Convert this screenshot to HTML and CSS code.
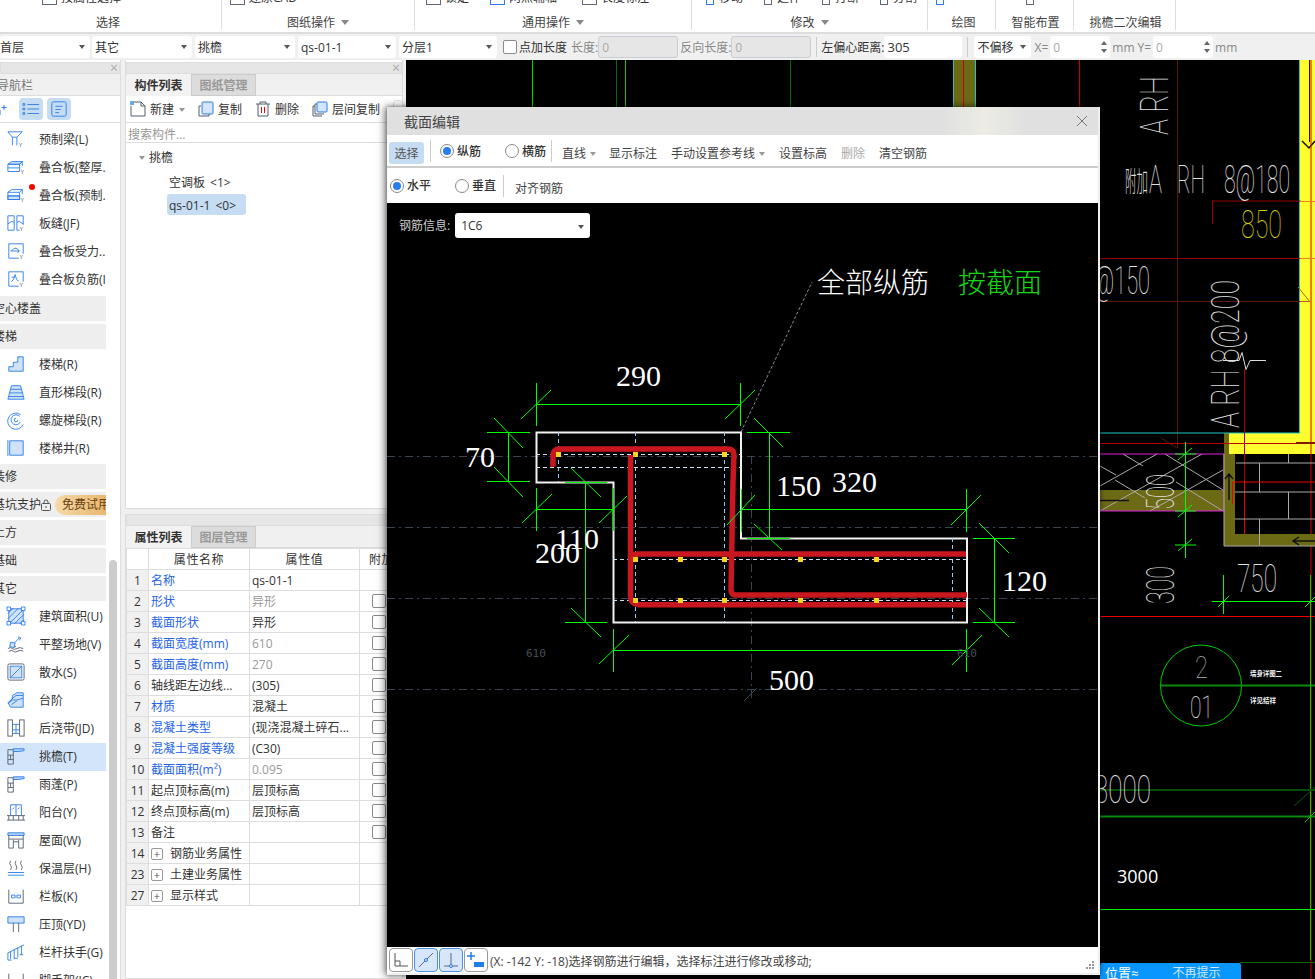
FILE: index.html
```html
<!DOCTYPE html>
<html lang="zh">
<head>
<meta charset="utf-8">
<title>截面编辑</title>
<link rel="stylesheet" href="styles.css">
</head>
<body>
<div class="app">
  <header class="ribbon">
    <section class="rgroup g1"><div class="rtools t1"><i class="ri"></i><span class="rt">按属性选择</span></div><div class="rlabel">选择</div></section>
    <section class="rgroup g2"><div class="rtools t2"><i class="ri"></i><span class="rt">还原CAD</span></div><div class="rlabel">图纸操作<i class="caret"></i></div></section>
    <section class="rgroup g3"><div class="rtools t3"><i class="ri"></i><span class="rt w1">锁定</span><i class="ri b"></i><span class="rt w2">两点辅轴</span><i class="ri"></i><span class="rt">长度标注</span></div><div class="rlabel">通用操作<i class="caret"></i></div></section>
    <section class="rgroup g4"><div class="rtools t4"><i class="ri s b"></i><span class="rt w3">移动</span><i class="ri s"></i><span class="rt w3">延伸</span><i class="ri s"></i><span class="rt w3">打断</span><i class="ri s"></i><span class="rt">分割</span></div><div class="rlabel">修改<i class="caret"></i></div></section>
    <section class="rgroup g5"><div class="rtools t5"><i class="ri s b"></i></div><div class="rlabel">绘图</div></section>
    <section class="rgroup g6"><div class="rtools t6"><i class="ri s"></i></div><div class="rlabel">智能布置</div></section>
    <section class="rgroup g7"><div class="rtools"></div><div class="rlabel">挑檐二次编辑</div></section>
  </header>

  <div class="optbar">
    <div class="sel s-floor">首层<i class="caret dk"></i></div>
    <div class="sel s-a">其它<i class="caret dk"></i></div>
    <div class="sel s-a">挑檐<i class="caret dk"></i></div>
    <div class="sel s-b">qs-01-1<i class="caret dk"></i></div>
    <div class="sel s-b">分层1<i class="caret dk"></i></div>
    <span class="chk opt-chk"></span>
    <span class="opt-t ml2">点加长度</span>
    <span class="opt-t muted ml4">长度:</span>
    <div class="inp dis">0</div>
    <span class="opt-t muted ml2">反向长度:</span>
    <div class="inp dis">0</div>
    <span class="vsep"></span>
    <span class="opt-t">左偏心距离:</span>
    <div class="inp on">305</div>
    <span class="vsep"></span>
    <div class="sel s-c">不偏移<i class="caret dk"></i></div>
    <span class="opt-t muted ml3">X=</span>
    <div class="inp spin"><span>0</span><span class="spn"><i></i><i></i></span></div>
    <span class="opt-t muted ml2">mm</span>
    <span class="opt-t muted ml3">Y=</span>
    <div class="inp spin"><span>0</span><span class="spn"><i></i><i></i></span></div>
    <span class="opt-t muted ml2">mm</span>
  </div>

  <main class="work">
    <aside class="nav">
      <div class="phead"><span class="x">×</span></div>
      <div class="nav-title">导航栏</div>
      <div class="nav-tools">
        <svg class="spark" viewBox="0 0 10 14"><path d="M0 10l3-2M3 8v5M3 10H0M7 3v5M4.500 5.500h5"/></svg>
        <span class="nbtn"><svg viewBox="0 0 20 20" class="bi"><path d="M1 4h2v2H1zM1 9h2v2H1zM1 14h2v2H1zM6 5h13M6 10h13M6 15h13"/></svg></span>
        <span class="nbtn"><svg viewBox="0 0 20 20" class="bi"><rect x="2" y="2" width="16" height="16" rx="2"/><path d="M6 7h8M6 10.500h6M6 14h4"/></svg></span>
      </div>
      <div class="nav-list">
        <div class="item"><svg class="ico" viewBox="0 0 20 20"><path d="M1 2h16l-6 6v9M1 2l5 6v9M6 8h5"/><text x="13" y="19" class="y">Y</text></svg><span>预制梁(L)</span></div>
        <div class="item"><svg class="ico" viewBox="0 0 20 20"><path class="fl" d="M1 7l4-3h12l-3 3z"/><path d="M1 7h13v8H1zM1 11h13M14 7l3-3v5"/><text x="15" y="18" class="y">Y</text></svg><span>叠合板(整厚.</span></div>
        <div class="item"><svg class="ico" viewBox="0 0 20 20"><path class="fl" d="M1 11h13v4H1z"/><path d="M1 7h13v8H1zM1 11h13M1 7l4-3h12l-3 3M17 4v5"/><text x="15" y="18" class="y">Y</text></svg><span>叠合板(预制.</span><b class="dot"></b></div>
        <div class="item"><svg class="ico" viewBox="0 0 20 20"><path d="M1 2h7v16H1zM11 2h7v10M11 2v16h3M1 11q4-4 7-2M11 9q3-2 7 2"/><text x="14" y="19" class="y">Y</text></svg><span>板缝(JF)</span></div>
        <div class="item"><svg class="ico" viewBox="0 0 20 20"><path d="M13 18H2V2h16v11M5 10q3-5 7-2 2 2 0 4M4 10h10"/><text x="14" y="19" class="y">Y</text></svg><span>叠合板受力..</span></div>
        <div class="item"><svg class="ico" viewBox="0 0 20 20"><path d="M13 18H2V2h16v11M5 13q3-2 4-8 2 8 4 7M5 8h3"/><text x="14" y="19" class="y">Y</text></svg><span>叠合板负筋(I</span></div>
        <div class="sect first">空心楼盖</div>
        <div class="sect">楼梯</div>
        <div class="item"><svg class="ico" viewBox="0 0 20 20"><path class="fl" d="M2 18v-5h5V8h5V2h6v16z"/></svg><span>楼梯(R)</span></div>
        <div class="item"><svg class="ico" viewBox="0 0 20 20"><path class="fl" d="M5 3h10l4 15H1z"/><path d="M4 7h12M3 11h14M2 15h16"/></svg><span>直形梯段(R)</span></div>
        <div class="item"><svg class="ico" viewBox="0 0 20 20"><path d="M18 15A9 9 0 1 1 15 4M15 12a5.500 5.500 0 1 1-1-6M12 10a2 2 0 1 1-2-2"/></svg><span>螺旋梯段(R)</span></div>
        <div class="item"><svg class="ico" viewBox="0 0 20 20"><path class="fl" d="M3 2h15v16H3z"/><path d="M1 1v18"/></svg><span>楼梯井(R)</span></div>
        <div class="sect tight">装修</div>
        <div class="sect pit"><span>基坑支护</span><svg class="lock" viewBox="0 0 10 12"><rect x=".5" y="4.500" width="9" height="7" rx="1"/><path d="M3 4.500V3a2 2 0 0 1 4 0v1.500M5 7v2"/></svg><b class="pill">免费试用</b></div>
        <div class="sect">土方</div>
        <div class="sect">基础</div>
        <div class="sect">其它</div>
        <div class="item"><svg class="ico" viewBox="0 0 20 20"><path class="fl" d="M2 2h16v16H2z"/><path d="M1 7l6-6M1 13L13 1M2 19L19 2M8 19l11-11M14 19l5-5"/><path class="dots" d="M0 0h4v4H0zM16 0h4v4h-4zM0 16h4v4H0zM16 16h4v4h-4z"/></svg><span>建筑面积(U)</span></div>
        <div class="item"><svg class="ico" viewBox="0 0 20 20"><path d="M8 9l6-6M12 2l3 1-1 3"/><path class="gy" d="M4 12l6 1M1 15q3-2 5 0t5 0 7 0M2 18q3-2 5 0t5 0 6 0"/><path class="fl" d="M4 8l5 1-1 5-5-1z"/></svg><span>平整场地(V)</span></div>
        <div class="item"><svg class="ico" viewBox="0 0 20 20"><rect class="gy" x="1" y="1" width="18" height="18" rx="2"/><rect class="fl" x="3.500" y="3.500" width="13" height="13"/><path d="M3.500 16.500L16.500 3.500"/></svg><span>散水(S)</span></div>
        <div class="item"><svg class="ico" viewBox="0 0 20 20"><path class="fl" d="M1 13l5-4V5l5-3h7v16H4z"/><path d="M1 14l5-4h5l7-2M4 10l6-5h8M5 15l6-4"/></svg><span>台阶</span></div>
        <div class="item"><svg class="ico" viewBox="0 0 20 20"><g class="gy"><rect x="1" y="1" width="5" height="18"/><rect x="14" y="1" width="5" height="18"/></g><path d="M6 6h8M6 12h8M10 6v6M6 16h8M10 12v4"/></svg><span>后浇带(JD)</span></div>
        <div class="item sel-item"><svg class="ico" viewBox="0 0 20 20"><g class="gy"><path d="M1 3v16h6V3zM1 9h6M1 14h6M4 9v5"/></g><path class="fb" d="M7 2h12v2L13 5H7z"/></svg><span>挑檐(T)</span></div>
        <div class="item"><svg class="ico" viewBox="0 0 20 20"><g class="gy"><path d="M1 3v16h6V3zM1 9h6M1 14h6M4 9v5"/></g><path class="fb" d="M7 2h12v2L13 5H7z"/></svg><span>雨蓬(P)</span></div>
        <div class="item"><svg class="ico" viewBox="0 0 20 20"><g class="gy"><path d="M0 19h20M0 14h20M2 14v5M7 14v5M13 14v5M18 14v5"/></g><path d="M4 14V2h12v12M10 2v12M6 7l2-2M12 7l2-2"/></svg><span>阳台(Y)</span></div>
        <div class="item"><svg class="ico" viewBox="0 0 20 20"><path class="fb" d="M1 2h18v3H1z"/><g class="gy"><path d="M2 5v14h5v-7h6v7h5V5M2 9h16M7 12v-2M13 12v-2"/></g></svg><span>屋面(W)</span></div>
        <div class="item"><svg class="ico" viewBox="0 0 20 20"><g class="gy"><path d="M4 2q-2 3 0 5t0 5M10 2q-2 3 0 5t0 5M16 2q-2 3 0 5t0 5"/></g><path d="M1 15h18M1 18h18"/></svg><span>保温层(H)</span></div>
        <div class="item"><svg class="ico" viewBox="0 0 20 20"><g class="gy"><path d="M2 3v15h16V3"/></g><path d="M5 9h4v3H5zM11 9h4v3h-4z"/></svg><span>栏板(K)</span></div>
        <div class="item"><svg class="ico" viewBox="0 0 20 20"><path class="fl" d="M1 2h18v7H1z"/><g class="gy"><path d="M7 9v10M13 9v10"/></g></svg><span>压顶(YD)</span></div>
        <div class="item"><svg class="ico" viewBox="0 0 20 20"><path d="M1 11L19 2M1 19v-8M4 18V9M8 18V7M12 16V5M16 13V3M1 19h4M8 17h4M14 13h4"/></svg><span>栏杆扶手(G)</span></div>
        <div class="item"><svg class="ico" viewBox="0 0 20 20"><g class="gy"><path d="M2 3v15M18 3v15M2 9l8 5 8-5M2 14h16"/></g></svg><span>脚手架(JC)</span></div>
      </div>
      <div class="vbar"></div>
    </aside>

    <div class="mid">
      <section class="panel top">
        <div class="phead"><span class="x">×</span></div>
        <div class="tabs"><span class="tab on">构件列表</span><span class="tab">图纸管理</span></div>
        <div class="ptools">
          <span class="pt"><svg class="ti" viewBox="0 0 16 16"><path d="M4 1h7l4 4v10H1V5"/><path d="M11 1v4h4"/><path class="bl" d="M0 0h4v4H0z"/></svg>新建<i class="caret small"></i></span>
          <span class="pt"><svg class="ti" viewBox="0 0 16 16"><path d="M3 5H1v10h10v-2"/><rect class="cp" x="4" y="1" width="11" height="12" rx="1"/></svg>复制</span>
          <span class="pt"><svg class="ti" viewBox="0 0 16 16"><path d="M1 3h14M5 3V1h6v2M3 3v12h10V3"/><path class="rd" d="M6.500 6v6M9.500 6v6"/></svg>删除</span>
          <span class="pt"><svg class="ti" viewBox="0 0 16 16"><path d="M3 5H1v10h9M5 3H3v10h9"/><rect class="cp" x="5" y="1" width="10" height="10" rx="1"/></svg>层间复制</span>
          <span class="ghost"></span>
        </div>
        <div class="search">搜索构件...</div>
        <div class="tree">
          <div class="tree-root"><i class="caret small"></i>挑檐</div>
          <div class="tree-leaf">空调板 &lt;1&gt;</div>
          <div class="tree-leaf on">qs-01-1 &lt;0&gt;</div>
        </div>
      </section>
      <section class="panel bottom">
        <div class="phead"></div>
        <div class="tabs"><span class="tab on">属性列表</span><span class="tab">图层管理</span></div>
        <table class="props">
          <colgroup><col class="c0"><col class="c1"><col class="c2"><col class="c3"></colgroup>
          <tr class="hd"><th></th><th>属性名称</th><th>属性值</th><th>附加</th></tr>
          <tr><td class="n">1</td><td class="lk">名称</td><td>qs-01-1</td><td></td></tr>
          <tr><td class="n">2</td><td class="lk">形状</td><td class="gv">异形</td><td><span class="chk"></span></td></tr>
          <tr><td class="n">3</td><td class="lk">截面形状</td><td>异形</td><td><span class="chk"></span></td></tr>
          <tr><td class="n">4</td><td class="lk">截面宽度(mm)</td><td class="gv">610</td><td><span class="chk"></span></td></tr>
          <tr><td class="n">5</td><td class="lk">截面高度(mm)</td><td class="gv">270</td><td><span class="chk"></span></td></tr>
          <tr><td class="n">6</td><td>轴线距左边线...</td><td>(305)</td><td><span class="chk"></span></td></tr>
          <tr><td class="n">7</td><td class="lk">材质</td><td>混凝土</td><td><span class="chk"></span></td></tr>
          <tr><td class="n">8</td><td class="lk">混凝土类型</td><td>(现浇混凝土碎石...</td><td><span class="chk"></span></td></tr>
          <tr><td class="n">9</td><td class="lk">混凝土强度等级</td><td>(C30)</td><td><span class="chk"></span></td></tr>
          <tr><td class="n">10</td><td class="lk">截面面积(m²)</td><td class="gv">0.095</td><td><span class="chk"></span></td></tr>
          <tr><td class="n">11</td><td>起点顶标高(m)</td><td>层顶标高</td><td><span class="chk"></span></td></tr>
          <tr><td class="n">12</td><td>终点顶标高(m)</td><td>层顶标高</td><td><span class="chk"></span></td></tr>
          <tr><td class="n">13</td><td>备注</td><td></td><td><span class="chk"></span></td></tr>
          <tr><td class="n">14</td><td class="grp"><i class="plus">+</i>钢筋业务属性</td><td></td><td></td></tr>
          <tr><td class="n">23</td><td class="grp"><i class="plus">+</i>土建业务属性</td><td></td><td></td></tr>
          <tr><td class="n">27</td><td class="grp"><i class="plus">+</i>显示样式</td><td></td><td></td></tr>
        </table>
      </section>
    </div>

    <div class="cad">
      <svg class="cad-svg" viewBox="406 60 909 919" width="909" height="919">
        <g fill="none">
          <path stroke="#00d400" d="M532.500 60v50M625.500 60v50"/>
          <path stroke="#0a6a0a" d="M616.500 60v50M790.500 60v50"/>
          <rect x="954" y="60" width="21" height="50" fill="#6d6a16"/>
          <path stroke="#21c7c7" d="M953.500 60v50M975.500 60v50"/>
          <path stroke="#c00" d="M963.500 60v50M1079.500 60v50"/>
          <path stroke="#5a1a08" d="M1177.500 60v388"/>
          <rect x="1300" y="60" width="15" height="374" fill="#ffff2e"/>
          <rect x="1229" y="433" width="86" height="21" fill="#ffff2e"/>
          <rect x="1224" y="433" width="5" height="21" fill="#6d6a16"/>
          <path stroke="#21c7c7" d="M1299.500 60v373M1100 433h200"/>
          <path stroke="#400" d="M1309.500 60v82"/>
          <path stroke="#111" stroke-width="1.500" d="M1302 141l7 7 6-7"/>
          <path stroke="#d00" d="M1311 60v919"/>
          <path stroke="#900" d="M1212.500 224v-23h88M1100 258.500h200"/>
          <path stroke="#f08020" d="M1300 201.500h15M1300 258.500h15"/>
          <path stroke="#5a1a08" d="M1100 301.500h200"/>
          <path stroke="#b86020" d="M1298 287l12 15M1300 301.500h10"/>
          <path stroke="#5a1a08" d="M1161 438l16 10"/>
          <path stroke="#b00" d="M1100 443.500h215"/>
          <path stroke="#801a00" stroke-width="2" d="M1296 443h19"/>
          <path stroke="#ddd" d="M1223 360.500h16l3-8 4 17 4-9h16"/>
          <path stroke="#a00" d="M1244.500 369V480"/>
          <path stroke="#e00" d="M1244.500 480V537h22"/>

          <rect x="1100" y="490" width="124" height="21" fill="#6d6a16"/>
          <path stroke="#aaa" d="M1100 486l57-32M1100 511l102-57M1150 511l73-41M1123 454l20 12M1165 454l58 36M1100 466l16 9M1176 482l47 29M1115 480l30 18"/>
          <path stroke="#e020e0" d="M1100 454h124v57h-124"/>
          <path stroke="#111" stroke-width="1.500" d="M1100 500.500h29"/>
          <path stroke="#0f0" d="M1185.500 442v116M1175 454h21M1175 511h21M1175 545h21M1178 460l14-12M1178 517l14-12M1178 551l14-12"/>

          <path fill="#6d6a16" d="M1224 454h11v80h80v12h-91z"/>
          <path stroke="#aaa" d="M1224 454v92h91M1236 463h79M1235 492h80M1235 519h80M1259.500 463v29M1259.500 519v26M1288.500 454v9M1288.500 492v27"/>
          <path stroke="#111" stroke-width="1.500" d="M1229 500v-26M1225 479l4-5 4 5M1315 541h-22M1299 537l-6 4 6 4"/>
          <path stroke="#e00" d="M1232.500 504v-22h83"/>

          <path stroke="#0f0" d="M1212 601.500h103M1223.500 575v39M1218 607l11-11M1305 607l10-10"/>
          <path stroke="#e00" d="M1100 616.500h215"/>
          <circle cx="1201" cy="685.500" r="40.500" stroke="#0c0"/>
          <path stroke="#0a8a0a" stroke-width="2" d="M1161 685.500h154"/>
          <path stroke="#0c0" d="M1310.500 575V960"/>
          <path stroke="#064d06" stroke-width="2" d="M1100 790h215"/>
          <path stroke="#0a8a0a" stroke-width="2" d="M1100 816.500h215"/>
          <path stroke="#0a5a0a" d="M1294 806l21-19"/>
          <path stroke="#0c0" d="M1305 822l10-10"/>
          <path stroke="#00f000" d="M1100 909.500h215"/>
          <path stroke="#0a6a0a" d="M1240 962.500h75"/>
        </g>
        <g class="cadt">
          <text x="1168" y="135" transform="rotate(-90 1168 135)" textLength="59" lengthAdjust="spacingAndGlyphs">A RH</text>
          <text x="1149" y="193" textLength="13" lengthAdjust="spacingAndGlyphs">A</text>
          <text x="1177" y="193" textLength="28" lengthAdjust="spacingAndGlyphs">RH</text>
          <text x="1224" y="193" textLength="66" lengthAdjust="spacingAndGlyphs">8@180</text>
          <text x="1241" y="238" textLength="41" lengthAdjust="spacingAndGlyphs" class="yl">850</text>
          <text x="1094" y="294" textLength="56" lengthAdjust="spacingAndGlyphs">@150</text>
          <text x="1239" y="428" transform="rotate(-90 1239 428)" textLength="148" lengthAdjust="spacingAndGlyphs">A RH 8@200</text>
          <text x="1174" y="510" transform="rotate(-90 1174 510)" textLength="36" lengthAdjust="spacingAndGlyphs">500</text>
          <text x="1174" y="604" transform="rotate(-90 1174 604)" textLength="38" lengthAdjust="spacingAndGlyphs">300</text>
          <text x="1237" y="592" textLength="40" lengthAdjust="spacingAndGlyphs">750</text>
          <text x="1195" y="678" textLength="13" lengthAdjust="spacingAndGlyphs" class="sm gr">2</text>
          <text x="1190" y="718" textLength="23" lengthAdjust="spacingAndGlyphs" class="sm">01</text>
          <text x="1094" y="803" textLength="57" lengthAdjust="spacingAndGlyphs">3000</text>
        </g>
        <text x="1125" y="192" class="sq" textLength="23" lengthAdjust="spacingAndGlyphs">附加</text>
        <text x="1250" y="676" class="tiny" textLength="32" lengthAdjust="spacingAndGlyphs">墙身详图二</text>
        <text x="1250" y="703" class="tiny" textLength="26" lengthAdjust="spacingAndGlyphs">详见结祥</text>
        <text x="1117" y="883" class="plain">3000</text>
      </svg>
      <div class="hint"><span class="hint-a">位置≈</span><span class="hint-b">不再提示</span></div>
    </div>
  </main>

  <div class="dialog">
    <div class="dlg-title"><span>截面编辑</span><svg class="dlg-x" viewBox="0 0 12 12"><path d="M1 1l10 10M11 1L1 11"/></svg></div>
    <div class="drow r1">
      <span class="dbtn on">选择</span>
      <span class="dsep"></span>
      <span class="radio on"></span><span class="rt1">纵筋</span>
      <span class="radio gap1"></span><span class="rt1">横筋</span>
      <span class="dsep s2"></span>
      <span class="dtxt tx-line">直线<i class="caret small"></i></span>
      <span class="dtxt">显示标注</span>
      <span class="dtxt">手动设置参考线<i class="caret small"></i></span>
      <span class="dtxt">设置标高</span>
      <span class="dtxt off">删除</span>
      <span class="dtxt">清空钢筋</span>
    </div>
    <div class="drow r2">
      <span class="radio on first"></span><span class="rt1">水平</span>
      <span class="radio gap2"></span><span class="rt1">垂直</span>
      <span class="dsep s3"></span>
      <span class="dtxt">对齐钢筋</span>
    </div>
    <div class="dcanvas">
      <div class="rebar-info"><label>钢筋信息:</label><div class="rsel">1C6<i class="caret dk"></i></div></div>
      <svg class="sec-svg" viewBox="387 203 711 744" width="711" height="744">
        <g fill="none">
          <path class="cl" d="M387 456.500h711M387 527.500h711M387 598.500h711M387 689.500h711M751.500 456v245"/>
          <path stroke="#3a4450" d="M757 688l-13 13"/>
          <path stroke="#8a8a8a" stroke-dasharray="3 2" d="M741 432l71-150"/>
          <path stroke="#f2f2f2" stroke-width="2" d="M536.500 432.500h204.500v106h226v84H613.500v-140h-77z"/>
          <path class="ds" d="M558.500 432v50M635.500 432v190M724.500 432v190M952.500 538v84"/>
          <path class="dsh" d="M536 454.500h205M536 467.500h205M613 559.500h354M613 600.500h354"/>

          <path class="rb" d="M553 466.700V456q0-7 7-7h168q6 0 6 6l-1 27-1 55-1 53q0 4 4 5h232M630.500 455V596q0 8 8 8.700h327.500M630.500 562q0-8 8-8h327.500"/>

          <g class="gd">
            <path d="M536 404.500h205M536.500 383v43M740.500 383v43M521 419l30-29M725 419l30-29"/>
            <path d="M508.500 432v50M487 432.500h43M487 481.500h43M494 418l29 30M494 467l29 30"/>
            <path d="M536 509.500h78M536.500 488v43M613.500 488v43M522 523l30-29M599 523l28-27"/>
            <path d="M585.500 482v140M565 482.500h42M565 622.500h42M571 468l30 29M571 608l30 29"/>
            <path d="M613 650.500h354M613.500 629v43M966.500 629v43M599 664l30-29M952 665l30-30"/>
            <path d="M741 509.500h226M741.500 489v43M966.500 489v43M727 525l28-30M951 525l30-30"/>
            <path d="M769.500 432v106M747 432.500h43M747 538.500h43M754 418l29 29M754 524l28 26"/>
            <path d="M994.500 538v84M973 538.500h42M973 622.500h42M979 523l30 30M979 608l30 29"/>
          </g>
        </g>
        <g class="pts">
          <rect x="556" y="452" width="5" height="5"/><rect x="633" y="452" width="5" height="5"/><rect x="722" y="452" width="5" height="5"/>
          <rect x="633" y="557" width="5" height="5"/><rect x="678" y="557" width="5" height="5"/><rect x="722" y="557" width="5" height="5"/><rect x="798" y="557" width="5" height="5"/><rect x="874" y="557" width="5" height="5"/>
          <rect x="633" y="598" width="5" height="5"/><rect x="678" y="598" width="5" height="5"/><rect x="722" y="598" width="5" height="5"/><rect x="798" y="598" width="5" height="5"/><rect x="874" y="598" width="5" height="5"/>
        </g>
        <g class="dim">
          <text x="616" y="386">290</text>
          <text x="465" y="467">70</text>
          <text x="776" y="496">150</text>
          <text x="832" y="492">320</text>
          <text x="555" y="549">110</text>
          <text x="535" y="563">200</text>
          <text x="1002" y="591">120</text>
          <text x="769" y="690">500</text>
        </g>
        <text x="526" y="657" class="faint">610</text>
        <text x="957" y="657" class="faint">610</text>
        <text x="817" y="293" class="lbl">全部纵筋</text>
        <text x="958" y="293" class="lbl gn">按截面</text>
      </svg>
    </div>
    <div class="dstatus">
      <span class="sb"><svg viewBox="0 0 20 20"><path d="M4 3v13h13M4 11h5v5"/></svg></span>
      <span class="sb on"><svg viewBox="0 0 20 20"><path d="M3 17L17 3"/><circle cx="10" cy="10" r="1.500"/></svg></span>
      <span class="sb on"><svg viewBox="0 0 20 20"><path d="M10 3v13M3 16h14"/><circle cx="10" cy="16" r="1.500"/></svg></span>
      <span class="sb"><svg viewBox="0 0 20 20"><path class="pl" d="M5 2v8M1 6h8"/><path class="bk" d="M8 12h10v5H8z"/></svg></span>
      <span class="stxt">(X: -142 Y: -18)选择钢筋进行编辑，选择标注进行修改或移动;</span>
      <svg class="grip" viewBox="0 0 10 10"><path d="M7 1h2v2H7zM4 4h2v2H4zM7 4h2v2H7zM1 7h2v2H1zM4 7h2v2H4zM7 7h2v2H7z"/></svg>
    </div>
  </div>
</div>
</body>
</html>
```
FILE: styles.css
```css
* { box-sizing: border-box; }
html, body { margin: 0; padding: 0; }
body { width: 1315px; height: 979px; overflow: hidden; background: #f0f0f0; }
.app {
  position: relative; width: 1315px; height: 979px; overflow: hidden;
  display: flex; flex-direction: column;
  font: 12px/1.2 "Open Sans", "Noto Sans CJK SC", sans-serif; color: #333;
}
i { font-style: normal; }

/* carets */
.caret {
  display: inline-block; width: 0; height: 0; margin-left: 6px; vertical-align: 2px;
  border-left: 4px solid transparent; border-right: 4px solid transparent; border-top: 5px solid #888;
}
.caret.dk { border-left-width: 3px; border-right-width: 3px; border-top: 4px solid #555; }
.caret.small { border-left-width: 3px; border-right-width: 3px; border-top: 4px solid #999; }

/* ribbon */
.ribbon { height: 34px; flex: none; display: flex; background: #fff; border-bottom: 2px solid #ddd; overflow: hidden; }
.rgroup { height: 30px; border-right: 1px solid #ddd; display: flex; flex-direction: column; flex: none; }
.g1 { width: 222px; padding-right: 5px; } .g2 { width: 193px; } .g3 { width: 277px; } .g4 { width: 236px; }
.g5 { width: 68px; } .g6 { width: 78px; padding-left: 2px; } .g7 { width: 102px; padding-left: 2px; }
.g5 .rlabel { padding-left: 4px; }
.rtools { height: 11px; display: flex; overflow: hidden; }
.rt { margin-top: -10px; line-height: 16px; white-space: nowrap; }
.ri { flex: none; width: 15px; height: 5px; margin-right: 4px; border: 1px solid #667; border-top: 0; }
.ri.b { border-color: #2b7de9; }
.ri.s { width: 8px; margin-right: 5px; }
.t1 { padding-left: 42px; } .t2 { padding-left: 8px; }
.t3 { padding-left: 11px; } .t4 { padding-left: 14px; }
.t5 { padding-left: 8px; } .t6 { padding-left: 28px; }
.w1 { width: 45px; } .w2 { width: 73px; } .w3 { width: 45px; }
.rlabel { text-align: center; line-height: 23px; height: 19px; color: #444; }

/* option bar */
.optbar { height: 26px; flex: none; display: flex; align-items: center; background: #f0f0f0; }
.sel {
  height: 22px; background: #fff; border-radius: 3px; display: flex; align-items: center; justify-content: space-between;
  padding: 2px 5px 0 3px; margin-right: 3px; flex: none; white-space: nowrap;
}
.sel .caret { margin-top: -2px; }
.s-floor { width: 90px; padding-left: 0; margin-right: 2px; }
.s-a { width: 100px; } .s-b { width: 98px; }
.s-c { width: 57px; margin: 0 0 0 2px; }
.chk { display: inline-block; width: 14px; height: 14px; border: 1px solid #8a8a8a; border-radius: 2px; background: #fff; vertical-align: middle; }
.opt-chk { margin-left: 3px; flex: none; }
.opt-t { white-space: nowrap; flex: none; padding-top: 2px; }
.muted { color: #888; }
.ml2 { margin-left: 2px; } .ml3 { margin-left: 3px; } .ml4 { margin-left: 4px; }
.inp { height: 22px; width: 80px; flex: none; border-radius: 3px; padding: 2px 0 0 3px; display: flex; align-items: center; background: #fff; }
.inp.dis { background: #e6e6e6; border: 1px solid #c8ced6; color: #aaa; }
.inp.on { width: 78px; font-size: 13px; }
.inp.spin { width: 60px; color: #aaa; justify-content: space-between; padding-right: 3px; margin-left: 2px; }
.spn { display: flex; flex-direction: column; gap: 4px; margin-top: -2px; }
.spn i { width: 0; height: 0; border-left: 3px solid transparent; border-right: 3px solid transparent; border-bottom: 4px solid #666; }
.spn i + i { border-bottom: 0; border-top: 4px solid #666; }
.vsep { width: 1px; height: 20px; background: #ccc; margin: 0 4px 0 5px; flex: none; }

/* work area */
.work { flex: 1; min-height: 0; display: flex; }
.phead { height: 12px; flex: none; margin-top: 2px; background: #e6e6e6; border: 1px solid #ddd; display: flex; justify-content: flex-end; color: #aaa; line-height: 9px; font-size: 14px; padding-right: 1px; }
.x { display: block; }

/* navigation */
.nav { width: 121px; flex: none; position: relative; background: #fff; border-right: 1px solid #ddd; overflow: hidden; }
.nav-title { height: 22px; line-height: 23px; text-indent: -3px; color: #777; background: #f0f0f0; border-bottom: 1px solid #ddd; }
.nav-tools { height: 27px; display: flex; align-items: center; gap: 4px; border-bottom: 1px solid #ddd; }
.spark { width: 10px; height: 14px; margin-right: 8px; margin-left: -3px; }
.spark path { fill: none; stroke: #2b7de9; stroke-width: 1; }
.nbtn { width: 24px; height: 22px; background: #c5dcf2; border-radius: 4px; display: flex; align-items: center; justify-content: center; }
.bi { width: 18px; height: 18px; }
.bi path, .bi rect { fill: none; stroke: #2b7de9; stroke-width: 1; }
.nav-list { padding-top: 3px; width: 106px; }
.item { height: 28px; display: flex; align-items: center; white-space: nowrap; overflow: hidden; padding-left: 7px; position: relative; }
.item > span { margin-left: 14px; }
.ico { width: 18px; height: 18px; flex: none; overflow: visible; margin-top: -2px; }
.ico path, .ico rect, .ico circle { fill: none; stroke: #2b7de9; stroke-width: 1; }
.ico .fl { fill: #cfe2fa; }
.ico .fb { fill: #b5d3f5; }
.ico .dots { fill: #fff; }
.ico .gy, .ico .gy path, .ico .gy rect { stroke: #555e6b; }
.y { font-size: 6px; fill: #555; font-family: "Liberation Sans", sans-serif; }
.dot { position: absolute; left: 29px; top: 2px; width: 6px; height: 6px; border-radius: 50%; background: #f00; }
.sect { height: 25px; line-height: 25px; margin: 3px 0 0; background: #eee; text-indent: -7px; white-space: nowrap; overflow: hidden; color: #333; }
.sect.first { margin-top: 2px; }
.sect.tight { margin-top: 1px; }
.sect + .item { margin-top: 2px; }
.pit { display: flex; align-items: center; text-indent: 0; }
.pit > span { margin-left: -7px; }
.lock { width: 10px; height: 12px; margin-left: 0; flex: none; }
.lock rect, .lock path { fill: none; stroke: #555; }
.pill { margin-left: 4px; width: 56px; height: 20px; line-height: 20px; flex: none; padding-left: 7px; border-radius: 10px 0 0 10px; background: linear-gradient(90deg, #f5d9a8, #e8b469); font-weight: 400; color: #6a4210; }
.sel-item { background: #d3e5fa; }
.vbar { position: absolute; left: 109px; top: 500px; width: 8px; height: 420px; background: #ccc; border-radius: 4px 4px 0 0; }

/* middle column */
.mid { width: 278px; margin-left: 4px; flex: none; display: flex; flex-direction: column; gap: 5px; }
.panel { background: #fff; border: 1px solid #ddd; border-top: 0; display: flex; flex-direction: column; }
.panel.top { height: 449px; }
.panel.bottom { flex: 1; min-height: 0; }
.panel.bottom .phead { margin-top: 0; }
.tabs { height: 22px; flex: none; display: flex; background: #f0f0f0; border-bottom: 1px solid #ddd; }
.tab { width: 65px; height: 22px; line-height: 21px; text-align: center; font-weight: 700; color: #999; background: #dcdcdc; border: 1px solid #ccc; }
.tab.on { color: #333; background: #f2f2f2; border-color: #f2f2f2; }
.ptools { height: 27px; flex: none; display: flex; align-items: center; padding-left: 4px; border-bottom: 1px solid #ddd; white-space: nowrap; }
.pt { display: flex; align-items: center; margin-right: 13px; padding-top: 3px; }
.pt .caret { margin-left: 5px; }
.ghost { width: 10px; height: 22px; margin: 4px 2px 0 auto; border: 1px solid #ddd; border-radius: 4px; flex: none; }
.ti { width: 16px; height: 16px; margin: -3px 4px 0 0; flex: none; }
.ti path, .ti rect { fill: none; stroke: #555e6b; }
.ti .bl { fill: #6aa8ee; stroke: none; }
.ti .cp { fill: #d3e5fa; stroke: #2b7de9; }
.ti .rd { stroke: #e00; }
.search { height: 20px; flex: none; padding-left: 2px; line-height: 23px; color: #999; border-bottom: 1px solid #ddd; }
.tree { padding-top: 1px; }
.tree-root { height: 26px; line-height: 28px; padding-left: 13px; }
.tree-root .caret { margin: 0 4px 0 0; }
.tree-leaf { margin-left: 41px; height: 24px; line-height: 26px; padding-left: 2px; width: 79px; white-space: nowrap; word-spacing: 2px; }
.tree-leaf.on { height: 21px; line-height: 23px; background: #c5dcf2; border-radius: 3px; }

/* table */
.props { border-collapse: collapse; table-layout: fixed; width: 277px; flex: none; }
.c0 { width: 22px; } .c1 { width: 101px; } .c2 { width: 110px; } .c3 { width: 44px; }
.props td, .props th { height: 21px; padding: 2px 2px 0; border: 1px solid #ddd; font-weight: 400; white-space: nowrap; overflow: hidden; }
.props th { text-align: center; letter-spacing: .6px; }
.props .n { text-align: center; background: #f0f0f0; padding: 2px 0 0; }
.lk { color: #2463e8; }
.gv { color: #999; }
.props td:last-child { padding: 0 0 0 12px; }
.props .grp { overflow: visible; padding-left: 2px; }
.plus { display: inline-block; width: 12px; height: 12px; line-height: 10px; text-align: center; font-size: 11px; border: 1px solid #999; border-radius: 2px; margin-right: 7px; vertical-align: 0; color: #555; }

/* CAD */
.cad { flex: 1; min-width: 0; margin-left: 3px; background: #000; position: relative; overflow: hidden; }
.cad-svg { display: block; }
.cadt text { font-family: Roboto, "Liberation Sans", sans-serif; font-weight: 100; font-size: 39px; fill: #e2e2e2; }
.cadt .yl { fill: #d0cc00; }
.cadt .gr { fill: #aaa; }
.cadt .sm { font-size: 32px; }
.sq { font-size: 28px; fill: #ddd; font-family: "Noto Sans CJK SC", sans-serif; font-weight: 300; }
.tiny { font-size: 7px; fill: #eee; font-family: "Noto Sans CJK SC", sans-serif; font-weight: 700; }
.plain { font-size: 18px; fill: #fff; font-family: "Open Sans", sans-serif; }
.hint { position: absolute; left: 694px; top: 903px; width: 141px; height: 20px; background: #0a96ff; border-radius: 2px 2px 0 0; color: #fff; display: flex; line-height: 20px; }
.hint-a { margin-left: 5px; font-size: 13px; }
.hint-b { margin-left: 34px; color: #cfe8ff; }

/* dialog */
.dialog {
  position: absolute; left: 387px; top: 107px; width: 713px; height: 868px;
  background: #fff; border-right: 2px solid #efefef; border-bottom: 2px solid #efefef; display: flex; flex-direction: column;
  box-shadow: -2px 0 8px rgba(0,0,0,.55), 0 0 4px rgba(0,0,0,.3);
}
.dlg-title {
  height: 28px; flex: none; display: flex; justify-content: space-between; align-items: center; padding: 2px 10px 0 17px;
  background: linear-gradient(90deg, #e0e0e0 0, #e0e0e0 78%, #ecece4 84%, #e0e0e0 90%, #e0e0e0 100%);
  font-size: 14px; color: #444;
}
.dlg-x { width: 12px; height: 12px; margin-top: -2px; }
.dlg-x path { stroke: #777; fill: none; }
.drow { display: flex; align-items: center; flex: none; white-space: nowrap; padding-left: 2px; }
.r1 { height: 33px; border-bottom: 2px solid #ccc; padding-top: 5px; }
.r2 { height: 35px; padding-top: 4px; }
.dbtn { width: 35px; height: 22px; line-height: 24px; text-align: center; border-radius: 3px; }
.dbtn.on { background: #c5dcf2; color: #555; }
.dsep { width: 1px; height: 22px; background: #ccc; margin: 0 9px 0 6px; }
.r1 .dsep { margin-top: -5px; }
.r2 .dsep { margin-top: -4px; }
.dsep.s2 { margin: -5px 10px 0 5px; }
.dsep.s3 { margin: -4px 11px 0 7px; }
.radio { width: 14px; height: 14px; border-radius: 50%; border: 1px solid #888; background: #fff; flex: none; display: inline-block; position: relative; margin-bottom: 4px; }
.radio.on::after { content: ""; position: absolute; left: 2px; top: 2px; width: 8px; height: 8px; border-radius: 50%; background: #2b7de9; }
.radio.first { margin-left: 1px; }
.rt1 { margin: 0 0 4px 3px; padding-top: 2px; font-weight: 500; }
.gap1 { margin-left: 24px; }
.gap2 { margin-left: 24px; }
.dtxt { margin-right: 14px; padding-top: 3px; color: #444; }
.tx-line { margin-right: 13px; }
.dtxt .caret { margin-left: 4px; }
.dtxt.off { color: #aaa; }
.dcanvas { flex: 1; min-height: 0; background: #000; position: relative; overflow: hidden; }
.sec-svg { display: block; }
.rebar-info { position: absolute; left: 12px; top: 10px; display: flex; align-items: center; gap: 5px; color: #ccc; }
.rebar-info label { padding-top: 2px; }
.rsel { width: 135px; height: 25px; background: #fff; border-radius: 3px; color: #333; display: flex; align-items: center; justify-content: space-between; padding: 2px 6px 0; }

.cl { stroke: #3a4450; stroke-dasharray: 8 4 2 4; }
.ds { stroke: #9cc8f0; stroke-dasharray: 4 3; }
.dsh { stroke: #cfe4f6; stroke-dasharray: 4 3; }
.rb { stroke: #c8171e; stroke-width: 5.500; stroke-linejoin: round; }
.gd path { stroke: #0f0; }
.pts rect { fill: #ffd21f; }
.dim text { font-family: "Liberation Serif", serif; font-size: 30px; fill: #fff; }
.faint { font-family: "DejaVu Sans Mono", monospace; font-size: 11px; fill: #444c58; }
.lbl { font-family: "Noto Sans CJK SC", sans-serif; font-weight: 300; font-size: 28px; fill: #fff; }
.lbl.gn { fill: #12d912; }

.dstatus { height: 26px; flex: none; display: flex; align-items: center; background: #fff; position: relative; padding-left: 2px; }
.sb { width: 24px; height: 24px; border: 1px solid #999; border-radius: 4px; margin-right: 1px; display: flex; align-items: center; justify-content: center; flex: none; }
.sb.on { background: #d7e6fb; border-color: #4a90e2; }
.sb svg { width: 20px; height: 20px; }
.sb path, .sb circle { fill: none; stroke: #555; stroke-width: 1; }
.sb.on path { stroke: #667; }
.sb.on circle { stroke: #2b7de9; fill: #cfe2fa; }
.sb .pl { stroke: #1f7ee8; stroke-width: 1.500; }
.sb .bk { fill: #1f7ee8; stroke: none; }
.stxt { margin-left: 1px; padding-top: 4px; white-space: nowrap; color: #444; letter-spacing: 0; }
.grip { position: absolute; right: 3px; bottom: 3px; width: 10px; height: 10px; }
.grip path { fill: #999; }
```
